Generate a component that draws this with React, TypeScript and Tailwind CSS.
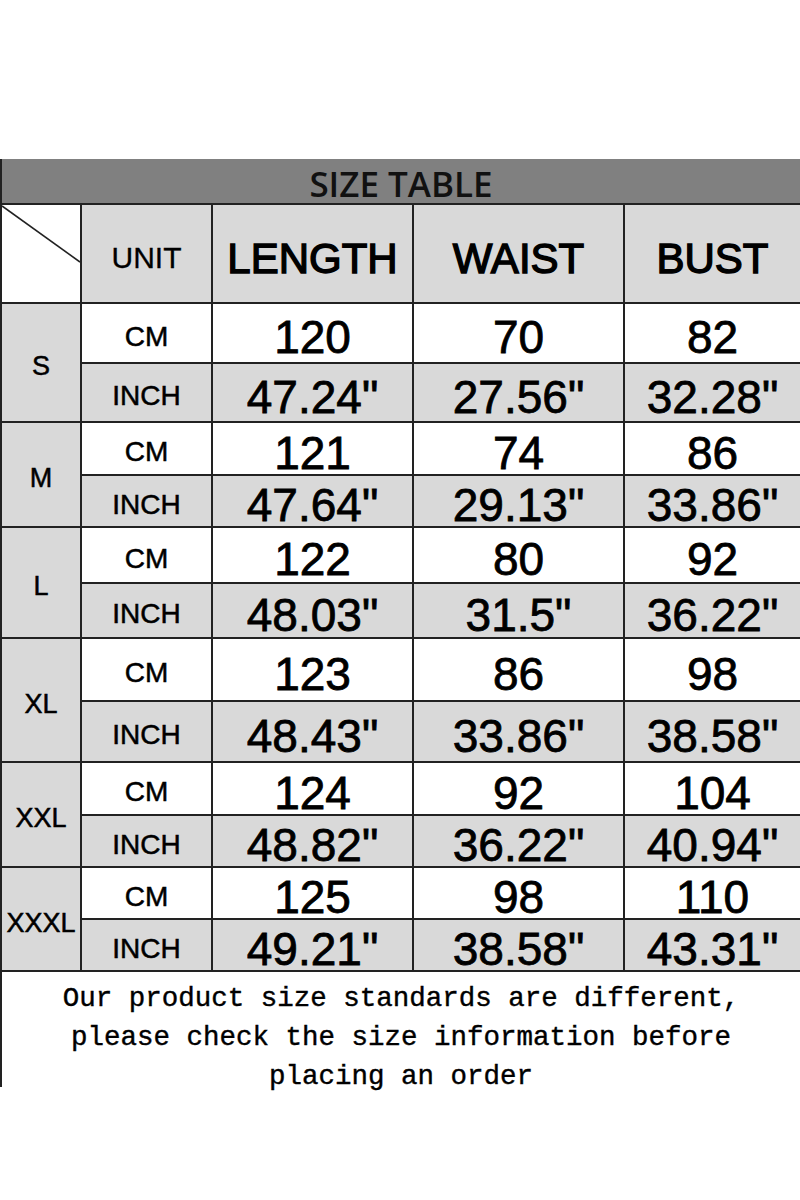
import React from 'react';

type Size = {
  label: string;
  cm: [string, string, string];
  inch: [string, string, string];
  rows: [string, string];
};

const sizes: Size[] = [
  { label: 'S', cm: ['120', '70', '82'], inch: ['47.24"', '27.56"', '32.28"'], rows: ['h-[58px]', 'h-[57px]'] },
  { label: 'M', cm: ['121', '74', '86'], inch: ['47.64"', '29.13"', '33.86"'], rows: ['h-[51px]', 'h-[50px]'] },
  { label: 'L', cm: ['122', '80', '92'], inch: ['48.03"', '31.5"', '36.22"'], rows: ['h-[54px]', 'h-[53px]'] },
  { label: 'XL', cm: ['123', '86', '98'], inch: ['48.43"', '33.86"', '38.58"'], rows: ['h-[61px]', 'h-[59px]'] },
  { label: 'XXL', cm: ['124', '92', '104'], inch: ['48.82"', '36.22"', '40.94"'], rows: ['h-[51px]', 'h-[50px]'] },
  { label: 'XXXL', cm: ['125', '98', '110'], inch: ['49.21"', '38.58"', '43.31"'], rows: ['h-[50px]', 'h-[50px]'] },
];

const arial = "font-['Liberation_Sans',Arial,sans-serif]";
const cell = 'flex items-center justify-center text-black';
const num = `${cell} ${arial} pt-[8px] text-[46px] leading-none [-webkit-text-stroke:0.8px_black]`;
const unit = `${cell} ${arial} pt-[7px] text-[28px] leading-none [-webkit-text-stroke:0.5px_black]`;
const head = `${cell} ${arial} h-[97px] bg-[#d9d9d9] pt-[10px] text-[42px] leading-none [-webkit-text-stroke:1.4px_black]`;

export default function App() {
  return (
    <div className="h-[1200px] w-[800px] bg-white pt-[159px]">
      <div className="border-l-2 border-[#222]">
        <div className="flex h-[44px] items-center justify-center bg-[#808080] pt-[4px]">
          <span className="font-['Open_Sans',sans-serif] text-[35px] font-semibold leading-none text-[#111]">
            SIZE TABLE
          </span>
        </div>

        <div className="grid grid-cols-[78px_129px_199px_209px_175px] gap-[2px] border-y-2 border-[#222] bg-[#222]">
          <div className="relative h-[97px] bg-white">
            <svg className="absolute inset-0" width="78" height="97" viewBox="0 0 78 97">
              <line x1="0" y1="1" x2="78" y2="57" stroke="#222" strokeWidth="1.6" />
            </svg>
          </div>
          <div className={`${cell} ${arial} h-[97px] bg-[#d9d9d9] pt-[8px] text-[30px] leading-none [-webkit-text-stroke:0.3px_black]`}>UNIT</div>
          <div className={head}>LENGTH</div>
          <div className={head}>WAIST</div>
          <div className={head}>BUST</div>

          {sizes.map((s) => (
            <React.Fragment key={s.label}>
              <div className={`${cell} ${arial} row-span-2 bg-[#d9d9d9] pt-[8px] text-[27px] leading-none [-webkit-text-stroke:0.5px_black]`}>
                {s.label}
              </div>
              <div className={`${unit} ${s.rows[0]} bg-white`}>CM</div>
              {s.cm.map((v, i) => (
                <div key={`cm${i}`} className={`${num} ${s.rows[0]} bg-white`}>{v}</div>
              ))}
              <div className={`${unit} ${s.rows[1]} bg-[#d9d9d9]`}>INCH</div>
              {s.inch.map((v, i) => (
                <div key={`in${i}`} className={`${num} ${s.rows[1]} bg-[#d9d9d9]`}>{v}</div>
              ))}
            </React.Fragment>
          ))}
        </div>

        <div className="h-[115px] pt-[7px] text-center font-['Liberation_Mono','Courier_New',monospace] text-[27.5px] leading-[39px] text-black [-webkit-text-stroke:0.4px_black]">
          <div>Our product size standards are different,</div>
          <div>please check the size information before</div>
          <div>placing an order</div>
        </div>
      </div>
    </div>
  );
}
